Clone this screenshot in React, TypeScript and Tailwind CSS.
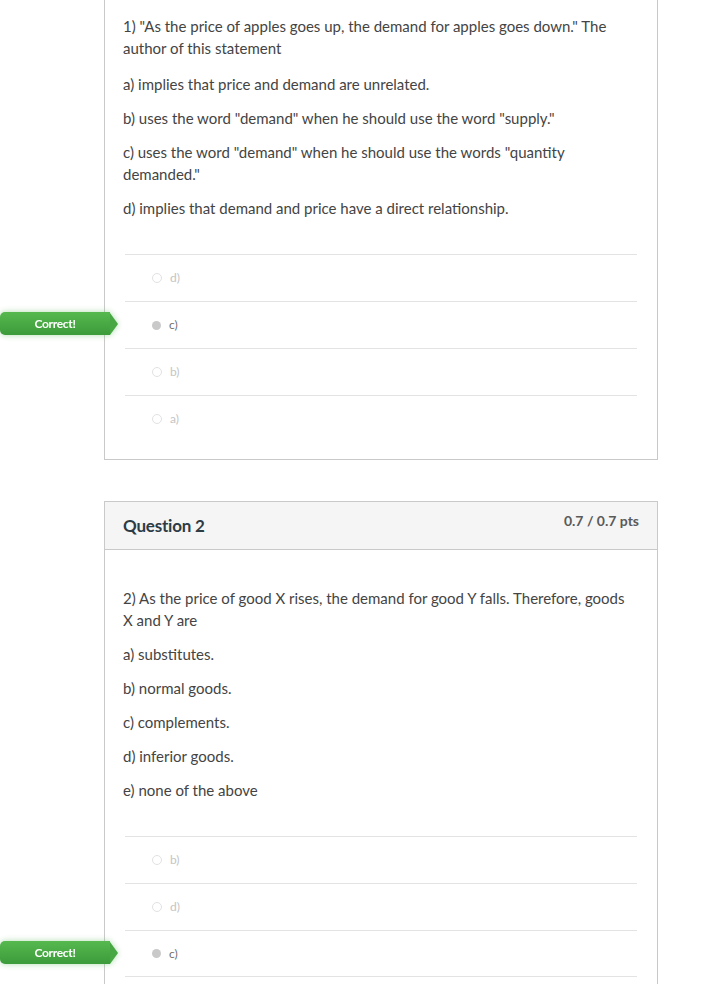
import { ReactNode } from "react";

type Answer = { label: string; picked?: boolean; last?: boolean };

const Q1_CHOICES = [
  "a) implies that price and demand are unrelated.",
  'b) uses the word "demand" when he should use the word "supply."',
  'c) uses the word "demand" when he should use the words "quantity demanded."',
  "d) implies that demand and price have a direct relationship.",
];

const Q2_CHOICES = [
  "a) substitutes.",
  "b) normal goods.",
  "c) complements.",
  "d) inferior goods.",
  "e) none of the above",
];

const CorrectBadge = () => (
  <div className="absolute left-[-125px] top-[10px] flex items-center drop-shadow-[0_0_3px_rgba(80,180,80,0.45)]">
    <div className="h-[23px] w-[110px] rounded-l-[5px] bg-gradient-to-b from-[#56b94f] to-[#3c9b3a] flex items-center justify-center text-white text-[12px] font-bold tracking-tight">
      Correct!
    </div>
    <div className="h-0 w-0 border-y-[11.5px] border-y-transparent border-l-[8px] border-l-[#46a743]" />
  </div>
);

const AnswerRow = ({ label, picked, last }: Answer) => (
  <div className={`relative h-[47px] border-t border-[#e3e3e3] flex items-center pl-[27px] gap-[8px] ${last ? "border-b" : ""}`}>
    {picked && <CorrectBadge />}
    {picked ? (
      <span className="w-[9px] h-[9px] rounded-full bg-[#c9c9c9]" />
    ) : (
      <span className="w-[10px] h-[10px] rounded-full border border-[#e2e2e2]" />
    )}
    <span className={`text-[12px] ${picked ? "text-[#6f6f6f]" : "text-[#c4c4c4]"}`}>{label}</span>
  </div>
);

const QuestionBody = ({ children }: { children: ReactNode }) => (
  <div className="flex flex-col gap-[12px] pr-[24px] text-[15px] leading-[22px] text-[#444444]">{children}</div>
);

export default function App() {
  return (
    <div className="min-h-screen bg-white pl-[104px] overflow-hidden" style={{ fontFamily: "Lato, 'Open Sans', sans-serif" }}>
      {/* Question 1 (header scrolled off) */}
      <div className="w-[554px] border-x border-b border-[#c9c9c9] pt-[15px] pb-[17px]">
        <div className="pl-[18px]">
          <QuestionBody>
            <p className="mb-[2px]">1) "As the price of apples goes up, the demand for apples goes down." The author of this statement</p>
            {Q1_CHOICES.map((c) => (
              <p key={c}>{c}</p>
            ))}
          </QuestionBody>
        </div>
        <div className="mt-[35px] mx-[20px]">
          {[{ label: "d)" }, { label: "c)", picked: true }, { label: "b)" }, { label: "a)" }].map((a) => (
            <AnswerRow key={a.label} {...a} />
          ))}
        </div>
      </div>

      {/* Question 2 */}
      <div className="mt-[41px] w-[554px] border border-[#c9c9c9]">
        <div className="h-[48px] bg-[#f5f5f5] border-b border-[#c9c9c9] flex items-start justify-between px-[18px]">
          <h2 className="mt-[11px] text-[17px] font-bold text-[#2d3b45] tracking-[-0.2px]">Question 2</h2>
          <span className="mt-[8px] text-[14px] font-bold text-[#5a5a5a]">0.7 / 0.7 pts</span>
        </div>
        <div className="pt-[37px] pl-[18px]">
          <QuestionBody>
            <p>2) As the price of good X rises, the demand for good Y falls. Therefore, goods X and Y are</p>
            {Q2_CHOICES.map((c) => (
              <p key={c}>{c}</p>
            ))}
          </QuestionBody>
        </div>
        <div className="mt-[35px] mx-[20px] pb-[40px]">
          {[{ label: "b)" }, { label: "d)" }, { label: "c)", picked: true, last: true }].map((a) => (
            <AnswerRow key={a.label} {...a} />
          ))}
        </div>
      </div>
    </div>
  );
}
